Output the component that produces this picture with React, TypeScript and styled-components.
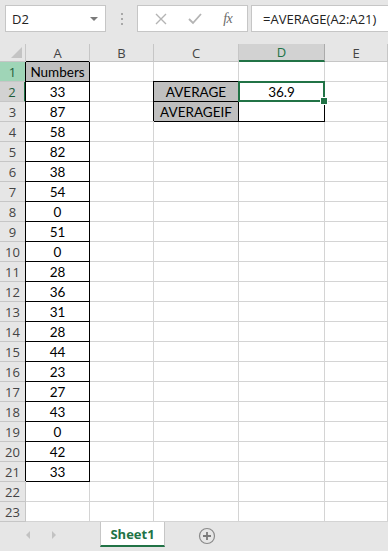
import React from 'react';
import styled, { createGlobalStyle } from 'styled-components';

const GlobalStyle = createGlobalStyle`
  html, body {
    margin: 0;
    padding: 0;
    background: #ffffff;
    overflow: hidden;
  }
  * {
    box-sizing: border-box;
  }
`;

const GREEN = '#217346';
const UI_FONT = `"Open Sans", "Noto Sans", "DejaVu Sans", sans-serif`;
const CELL_FONT = `Lato, "Liberation Sans", sans-serif`;

const Window = styled.div`
  width: 388px;
  height: 551px;
  display: flex;
  flex-direction: column;
  background: #e6e6e6;
  overflow: hidden;
`;

const Toolbar = styled.div`
  height: 44px;
  display: flex;
  align-items: flex-start;
  padding: 5px 0 0 5px;
  background: #e6e6e6;
`;

const NameBox = styled.div`
  width: 101px;
  height: 27px;
  background: #fff;
  border: 1px solid #c6c6c6;
  display: flex;
  align-items: center;
  justify-content: space-between;
  padding: 0 7px 0 6px;
  font-family: ${UI_FONT};
  font-size: 13px;
  color: #222;
`;

const DropArrow = styled.span`
  width: 0;
  height: 0;
  border-left: 4px solid transparent;
  border-right: 4px solid transparent;
  border-top: 4px solid #7a7a7a;
`;

const Grip = styled.div`
  width: 31px;
  height: 27px;
  display: flex;
  flex-direction: column;
  align-items: center;
  justify-content: center;
  gap: 3px;
`;

const GripDot = styled.span`
  width: 2px;
  height: 2px;
  background: #a8a8a8;
`;

const FxButtons = styled.div`
  width: 111px;
  height: 27px;
  background: #fff;
  border: 1px solid #c6c6c6;
  display: flex;
  align-items: center;
  justify-content: space-around;
  padding: 0 4px 0 6px;
`;

const FxLabel = styled.span`
  font-family: "Liberation Serif", serif;
  font-style: italic;
  font-size: 14px;
  color: #6b6b6b;
  letter-spacing: -0.5px;
`;

const FormulaInput = styled.div`
  flex: 1;
  height: 27px;
  margin-left: 3px;
  background: #fff;
  border: 1px solid #c6c6c6;
  border-right: none;
  display: flex;
  align-items: center;
  padding-left: 11px;
  font-family: ${UI_FONT};
  font-size: 13px;
  color: #222;
  white-space: nowrap;
`;

const Sheet = styled.div`
  display: grid;
  grid-template-columns: 26px 64px 64px 85px 86px 63px;
  grid-template-rows: 18px;
  grid-auto-rows: 20px;
  background: #fff;
`;

const Corner = styled.div`
  position: relative;
  background: #e6e6e6;
  border-right: 1px solid #c6c6c6;
  border-bottom: 1px solid #c6c6c6;

  &::after {
    content: '';
    position: absolute;
    right: 3px;
    bottom: 3px;
    width: 0;
    height: 0;
    border-left: 11px solid transparent;
    border-bottom: 11px solid #c4c4c4;
  }
`;

const ColHead = styled.div<{ active?: boolean }>`
  display: flex;
  align-items: center;
  justify-content: center;
  font-family: ${UI_FONT};
  font-size: 13px;
  color: ${p => (p.active ? GREEN : '#444')};
  background: ${p => (p.active ? '#d2d2d2' : '#e6e6e6')};
  border-right: 1px solid ${p => (p.active ? '#ababab' : '#c6c6c6')};
  border-bottom: ${p => (p.active ? `2px solid ${GREEN}` : '1px solid #c6c6c6')};
`;

const RowHead = styled.div<{ mode?: 'row' | 'cell' }>`
  display: flex;
  align-items: center;
  justify-content: center;
  padding-top: 1px;
  font-family: ${UI_FONT};
  font-size: 13px;
  color: ${p => (p.mode ? '#1e5d3a' : '#444')};
  background: ${p => (p.mode === 'row' ? '#9fd5b7' : p.mode === 'cell' ? '#d2d2d2' : '#e6e6e6')};
  border-bottom: 1px solid #c6c6c6;
  border-right: ${p => (p.mode === 'cell' ? `2px solid ${GREEN}` : '1px solid #c6c6c6')};
`;

const Cell = styled.div<{ boxed?: boolean; shaded?: boolean }>`
  display: flex;
  align-items: center;
  justify-content: center;
  font-family: ${CELL_FONT};
  font-size: 13.5px;
  color: #000;
  white-space: nowrap;
  padding-top: 1px;
  background: ${p => (p.shaded ? '#bfbfbf' : '#fff')};
  border-right: 1px solid ${p => (p.boxed ? '#000' : '#d4d4d4')};
  border-bottom: 1px solid ${p => (p.boxed ? '#000' : '#d4d4d4')};
  box-shadow: ${p => (p.boxed ? '-1px -1px 0 0 #000' : 'none')};
`;

const SelectedCell = styled(Cell)`
  position: relative;
  border: 2px solid ${GREEN};
  margin: -1px 0 0 -1px;
  box-shadow: none;

  &::after {
    content: '';
    position: absolute;
    right: -5px;
    bottom: -5px;
    width: 6px;
    height: 6px;
    background: ${GREEN};
    border: 1px solid #fff;
  }
`;

const TabBar = styled.div`
  flex: 1;
  display: flex;
  align-items: flex-start;
  background: #e6e6e6;
`;

const ScrollArrows = styled.div`
  width: 100px;
  height: 26px;
  display: flex;
  align-items: center;
  gap: 22px;
  padding-left: 26px;
`;

const Arrow = styled.span<{ dir: 'left' | 'right' }>`
  width: 0;
  height: 0;
  border-top: 4px solid transparent;
  border-bottom: 4px solid transparent;
  ${p => (p.dir === 'left' ? 'border-right: 4px solid #c2c2c2;' : 'border-left: 4px solid #c2c2c2;')}
`;

const SheetTab = styled.div`
  width: 65px;
  height: 25px;
  background: #fff;
  border-left: 1px solid #c6c6c6;
  border-right: 1px solid #c6c6c6;
  border-bottom: 2px solid ${GREEN};
  display: flex;
  align-items: center;
  justify-content: center;
  font-family: ${UI_FONT};
  font-weight: 700;
  font-size: 13px;
  color: ${GREEN};
`;

const AddSheet = styled.div`
  width: 83px;
  height: 26px;
  display: flex;
  align-items: center;
  justify-content: center;
  padding-top: 2px;
`;

const numbers = [33, 87, 58, 82, 38, 54, 0, 51, 0, 28, 36, 31, 28, 44, 23, 27, 43, 0, 42, 33];
const cols = ['A', 'B', 'C', 'D', 'E'];

const CloseIcon = () => (
  <svg width="12" height="12" viewBox="0 0 12 12">
    <path d="M1 1 L11 11 M11 1 L1 11" stroke="#b4b4b4" strokeWidth="1.4" fill="none" />
  </svg>
);

const CheckIcon = () => (
  <svg width="14" height="12" viewBox="0 0 14 12">
    <path d="M1 6 L5 10 L13 1" stroke="#b4b4b4" strokeWidth="1.8" fill="none" />
  </svg>
);

const PlusCircle = () => (
  <svg width="18" height="18" viewBox="0 0 18 18">
    <circle cx="9" cy="9" r="7.5" stroke="#8a8a8a" strokeWidth="1.2" fill="none" />
    <path d="M9 5 V13 M5 9 H13" stroke="#7a7a7a" strokeWidth="1.8" />
  </svg>
);

const App: React.FC = () => {
  const rows = Array.from({ length: 23 }, (_, i) => i + 1);

  const renderCell = (r: number, c: string) => {
    const key = `${c}${r}`;
    if (c === 'A' && r === 1) return <Cell key={key} boxed shaded>Numbers</Cell>;
    if (c === 'A' && r <= 21) return <Cell key={key} boxed>{numbers[r - 2]}</Cell>;
    if (c === 'C' && r === 2) return <Cell key={key} boxed shaded>AVERAGE</Cell>;
    if (c === 'C' && r === 3) return <Cell key={key} boxed shaded>AVERAGEIF</Cell>;
    if (c === 'D' && r === 2) return <SelectedCell key={key}>36.9</SelectedCell>;
    if (c === 'D' && r === 3) return <Cell key={key} boxed />;
    return <Cell key={key} />;
  };

  return (
    <Window>
      <GlobalStyle />
      <Toolbar>
        <NameBox>
          D2
          <DropArrow />
        </NameBox>
        <Grip>
          <GripDot />
          <GripDot />
          <GripDot />
        </Grip>
        <FxButtons>
          <CloseIcon />
          <CheckIcon />
          <FxLabel>fx</FxLabel>
        </FxButtons>
        <FormulaInput>=AVERAGE(A2:A21)</FormulaInput>
      </Toolbar>

      <Sheet>
        <Corner />
        {cols.map(c => (
          <ColHead key={c} active={c === 'D'}>{c}</ColHead>
        ))}
        {rows.map(r => (
          <React.Fragment key={r}>
            <RowHead mode={r === 1 ? 'row' : r === 2 ? 'cell' : undefined}>{r}</RowHead>
            {cols.map(c => renderCell(r, c))}
          </React.Fragment>
        ))}
      </Sheet>

      <TabBar>
        <ScrollArrows>
          <Arrow dir="left" />
          <Arrow dir="right" />
        </ScrollArrows>
        <SheetTab>Sheet1</SheetTab>
        <AddSheet>
          <PlusCircle />
        </AddSheet>
      </TabBar>
    </Window>
  );
};

export default App;
